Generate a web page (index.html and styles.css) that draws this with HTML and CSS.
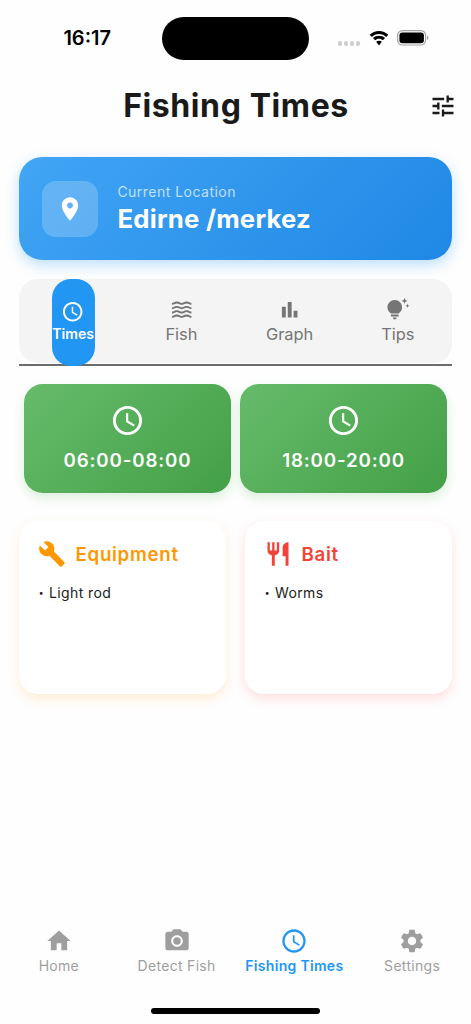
FILE: index.html
```
<!DOCTYPE html>
<html lang="en">
<head>
<meta charset="utf-8">
<meta name="viewport" content="width=device-width, initial-scale=1">
<title>Fishing Times</title>
<link rel="stylesheet" href="styles.css">
</head>
<body>
<svg class="symbols" aria-hidden="true">
  <symbol id="clock" viewBox="0 0 24 24"><path d="M11.99 2C6.47 2 2 6.48 2 12s4.47 10 9.99 10C17.52 22 22 17.52 22 12S17.52 2 11.99 2zM12 20c-4.42 0-8-3.58-8-8s3.58-8 8-8 8 3.58 8 8-3.58 8-8 8zm.5-13H11v6l5.25 3.15.75-1.23-4.5-2.67z"/></symbol>
  <symbol id="wave" viewBox="0 0 24 24"><path id="w" d="M17 16.99c-1.35 0-2.2.42-2.95.8-.65.33-1.18.6-2.05.6-.9 0-1.4-.25-2.05-.6-.75-.38-1.57-.8-2.95-.8s-2.2.42-2.95.8c-.65.33-1.17.6-2.05.6v1.95c1.35 0 2.2-.42 2.95-.8.65-.33 1.17-.6 2.05-.6s1.4.25 2.05.6c.75.38 1.57.8 2.95.8s2.2-.42 2.95-.8c.65-.33 1.18-.6 2.05-.6.9 0 1.4.25 2.05.6.75.38 1.58.8 2.95.8v-1.95c-.9 0-1.4-.25-2.05-.6-.75-.38-1.6-.8-2.95-.8z"/><use href="#w" y="-4.45"/><use href="#w" y="-8.9"/><use href="#w" y="-13.35"/></symbol>
</svg>
<header class="status">
  <div class="status-time"><span>16:17</span></div>
  <div class="island"></div>
  <div class="status-icons">
    <span class="dots"><i></i><i></i><i></i><i></i></span>
    <svg class="wifi" viewBox="0 0 20 15"><path d="M10 3C12.8 3 15.3 4.1 17.2 5.9L19.3 3.8C16.9 1.5 13.6.1 10 .1S3.1 1.5.7 3.8l2.1 2.1C4.7 4.100 7.200 3 10 3z"/><path d="M10 7.700c1.500 0 2.900.600 3.900 1.500L16 7.100C14.400 5.600 12.300 4.800 10 4.800S5.600 5.600 4 7.100l2.100 2.100c1-.900 2.400-1.500 3.900-1.500z"/><path d="M10 9.700c-1.100 0-2.100.4-2.800 1.100L10 14.400l2.800-3.600C12.100 10.100 11.100 9.700 10 9.700z"/></svg>
    <svg class="battery" viewBox="0 0 32 16"><rect x=".6" y=".6" width="28" height="14.400" rx="4.800" fill="none" stroke="#a3a3a3" stroke-width="1.200"/><rect x="2.400" y="2.400" width="24.500" height="10.800" rx="3"/><path d="M30 5.500c1.900.900 1.900 3.700 0 4.600z" fill="#a3a3a3"/></svg>
  </div>
</header>
<div class="titlebar">
  <h1>Fishing Times</h1>
  <svg class="icon-lg tune" viewBox="0 0 24 24"><path d="M3 17v2h6v-2H3zM3 5v2h10V5H3zm10 16v-2h8v-2h-8v-2h-2v6h2zM7 9v2H3v2h4v2h2V9H7zm14 4v-2H11v2h10zm-6-4h2V7h4V5h-4V3h-2v6z"/></svg>
</div>
<main>
  <section class="location">
    <div class="pin"><svg class="icon-lg" viewBox="0 0 24 24"><path d="M12 2C8.130 2 5 5.130 5 9c0 5.250 7 13 7 13s7-7.750 7-13c0-3.870-3.130-7-7-7zm0 9.500c-1.380 0-2.500-1.120-2.500-2.500s1.120-2.500 2.500-2.500 2.500 1.120 2.500 2.500-1.120 2.500-2.500 2.500z"/></svg></div>
    <div class="place"><span class="place-label">Current Location</span><strong>Edirne /merkez</strong></div>
  </section>
  <nav class="tabs">
    <a class="tab tab-active"><span class="tab-pill"><svg class="icon-md"><use href="#clock"/></svg><span>Times</span></span></a>
    <a class="tab"><svg class="icon-md"><use href="#wave"/></svg><span>Fish</span></a>
    <a class="tab"><svg class="icon-md" viewBox="0 0 24 24"><path d="M4 9h4v11H4zm12 4h4v7h-4zm-6-9h4v16h-4z"/></svg><span>Graph</span></a>
    <a class="tab"><svg class="icon-md" viewBox="0 0 24 24"><path d="M7 20h4c0 1.100-.9 2-2 2s-2-.9-2-2zm-2-1h8v-2H5v2zm11.500-9.500c0 3.820-2.660 5.860-3.770 6.500H5.270C4.160 15.360 1.500 13.320 1.500 9.500 1.500 5.360 4.860 2 9 2s7.500 3.360 7.500 7.500zm4.870-2.130L20 8l1.370.63L22 10l.63-1.370L24 8l-1.370-.63L22 6l-.63 1.370zM19 6l.94-2.060L22 3l-2.060-.94L19 0l-.94 2.060L16 3l2.060.94L19 6z"/></svg><span>Tips</span></a>
  </nav>
  <section class="times">
    <div class="time"><svg class="icon-xl"><use href="#clock"/></svg><span>06:00-08:00</span></div>
    <div class="time"><svg class="icon-xl"><use href="#clock"/></svg><span>18:00-20:00</span></div>
  </section>
  <section class="cards">
    <article class="card card-gear">
      <h2><svg class="icon-lg" viewBox="0 0 24 24"><path d="M22.700 19l-9.100-9.100c.9-2.300.4-5-1.500-6.900-2-2-5-2.400-7.400-1.300L9 6 6 9 1.600 4.700C.4 7.100.9 10.100 2.900 12.100c1.900 1.900 4.600 2.400 6.900 1.500l9.100 9.100c.4.4 1 .4 1.400 0l2.300-2.300c.5-.4.5-1.100.1-1.400z"/></svg><span>Equipment</span></h2>
      <p><b>•</b><span>Light rod</span></p>
    </article>
    <article class="card card-bait">
      <h2><svg class="icon-lg" viewBox="0 0 24 24"><path d="M11 9H9V2H7v7H5V2H3v7c0 2.120 1.660 3.840 3.750 3.970V22h2.500v-9.030C11.340 12.840 13 11.120 13 9V2h-2v7zm5-3v8h2.500v8H21V2c-2.760 0-5 2.240-5 4z"/></svg><span>Bait</span></h2>
      <p><b>•</b><span>Worms</span></p>
    </article>
  </section>
</main>
<nav class="bottom">
  <a><svg class="icon-lg" viewBox="0 0 24 24"><path d="M10 20v-6h4v6h5v-8h3L12 3 2 12h3v8z"/></svg><span>Home</span></a>
  <a><svg class="icon-lg" viewBox="0 0 24 24"><circle cx="12" cy="12" r="3.200"/><path d="M9 2L7.170 4H4c-1.100 0-2 .9-2 2v12c0 1.100.9 2 2 2h16c1.100 0 2-.9 2-2V6c0-1.100-.9-2-2-2h-3.170L15 2H9zm3 15c-2.760 0-5-2.240-5-5s2.240-5 5-5 5 2.240 5 5-2.240 5-5 5z"/></svg><span>Detect Fish</span></a>
  <a class="current"><svg class="icon-lg"><use href="#clock"/></svg><span>Fishing Times</span></a>
  <a><svg class="icon-lg" viewBox="0 0 24 24"><path d="M19.140 12.940c.04-.3.060-.61.060-.94 0-.32-.02-.64-.07-.94l2.030-1.580c.18-.14.230-.41.120-.61l-1.920-3.320c-.12-.22-.37-.29-.59-.22l-2.390.96c-.5-.38-1.030-.7-1.620-.94l-.36-2.540c-.04-.24-.24-.41-.48-.41h-3.840c-.24 0-.43.170-.47.410l-.36 2.540c-.59.240-1.130.570-1.620.940l-2.390-.96c-.22-.08-.47 0-.59.220L2.740 8.870c-.12.210-.08.470.12.610l2.030 1.580c-.05.3-.09.630-.09.940s.02.640.070.940l-2.030 1.580c-.18.140-.23.410-.12.610l1.920 3.320c.12.220.37.290.59.220l2.390-.96c.5.380 1.030.7 1.620.94l.36 2.540c.05.240.24.410.48.410h3.840c.24 0 .44-.17.47-.41l.36-2.540c.59-.24 1.130-.56 1.620-.94l2.390.96c.22.080.47 0 .59-.22l1.920-3.320c.12-.22.070-.47-.12-.61l-2.010-1.580zM12 15.600c-1.980 0-3.600-1.620-3.600-3.600s1.620-3.600 3.600-3.600 3.600 1.620 3.600 3.600-1.620 3.600-3.600 3.600z"/></svg><span>Settings</span></a>
</nav>
<footer class="home-indicator"></footer>
</body>
</html>
```
FILE: styles.css
```
* { box-sizing: border-box; }
body {
  margin: 0;
  height: 1024px;
  display: flex;
  flex-direction: column;
  background: #fefefe;
  color: #1a1a1a;
  font-family: Inter, "Liberation Sans", sans-serif;
  overflow: hidden;
}
svg { display: block; fill: currentColor; flex: none; }
.symbols { position: absolute; width: 0; height: 0; }
.icon-md { width: 23.4px; height: 23.4px; }
.icon-lg { width: 28px; height: 28px; }
.icon-xl { width: 35px; height: 35px; }

.status {
  height: 76px;
  padding-top: 16.5px;
  display: grid;
  grid-template-columns: 162px 147px 162px;
  color: #000;
}
.status-time { height: 43px; display: flex; align-items: center; justify-content: flex-end; padding-right: 51px; font-size: 20px; font-weight: 600; letter-spacing: 0; }
.island { height: 43px; border-radius: 22px; background: #000; }
.status-icons { height: 43px; display: flex; align-items: center; padding-left: 28.5px; }
.dots { display: flex; gap: 2px; padding-top: 11px; margin-right: 9px; }
.dots i { width: 4.2px; height: 4.2px; border-radius: 50%; background: #cdcdcd; }
.wifi { width: 20px; height: 15px; margin-right: 8px; }
.battery { width: 32px; height: 16px; }

.titlebar { height: 60px; display: grid; grid-template-columns: 1fr auto 1fr; align-items: center; padding: 0 14.5px; }
h1 { grid-column: 2; margin: 0; padding-left: 1px; font-size: 32px; line-height: 38px; font-weight: 700; letter-spacing: .6px; }
.tune { justify-self: end; }

main { padding: 21px 19px 0; display: flex; flex-direction: column; }
.location {
  height: 103px;
  padding: 0 23.4px;
  display: flex;
  align-items: center;
  gap: 19px;
  border-radius: 23.4px;
  background: linear-gradient(135deg, #42a5f5, #1e88e5);
  box-shadow: 0 5px 14px rgba(33, 150, 243, .3);
  color: #fff;
}
.pin { width: 56px; height: 56px; border-radius: 14px; display: grid; place-items: center; background: rgba(255, 255, 255, .2); }
.place { display: flex; flex-direction: column; gap: 2px; }
.place-label { font-size: 14px; line-height: 18px; letter-spacing: .48px; color: rgba(255, 255, 255, .7); }
.place strong { font-size: 25.7px; line-height: 32px; font-weight: 650; letter-spacing: .25px; }

.tabs {
  height: 87px;
  margin-top: 19px;
  display: grid;
  grid-template-columns: repeat(4, 1fr);
  border-radius: 19px 19px 0 0;
  position: relative;
  isolation: isolate;
  color: #757575;
  font-size: 16.4px;
}
.tabs::before { content: ""; position: absolute; z-index: -1; inset: 0 0 3px; border-radius: 19px; background: #f4f4f4; }
.tabs::after { content: ""; position: absolute; z-index: -1; left: 0; right: 0; bottom: 0; height: 2px; background: #6c6c6c; }
.tab { display: flex; flex-direction: column; align-items: center; justify-content: center; line-height: 22px; gap: 1px; padding-bottom: 2px; }
.tab-active { padding-bottom: 0; }
.tab-pill { width: 43px; height: 87px; display: flex; flex-direction: column; align-items: center; justify-content: center; border-radius: 19px; background: #2196f3; color: #fff; font-size: 14.1px; font-weight: 600; }

.times { margin-top: 18px; padding: 0 5px; display: grid; grid-template-columns: 1fr 1fr; gap: 9px; }
.time { height: 109px; display: flex; flex-direction: column; align-items: center; justify-content: center; gap: 10px; border-radius: 18.7px; background: linear-gradient(135deg, #66bb6a, #43a047); box-shadow: 0 5px 12px rgba(76, 175, 80, .2); color: #fff; font-size: 18.7px; line-height: 26px; font-weight: 600; letter-spacing: .85px; }

.cards { margin-top: 28px; display: grid; grid-template-columns: 1fr 1fr; gap: 19px; }
.card { height: 173px; padding: 19px; border-radius: 18.7px; background: #fff; }
.card-gear { box-shadow: 0 5px 12px rgba(255, 152, 0, .16); }
.card-bait { box-shadow: 0 5px 12px rgba(244, 67, 54, .16); }
.card h2 { margin: 0; height: 28px; display: flex; align-items: center; gap: 9.5px; font-size: 18.7px; font-weight: 600; letter-spacing: .7px; }
.card-gear h2 { color: #ff9800; }
.card-bait h2 { color: #f44336; }
.card p { margin: 15px 0 0; display: flex; line-height: 20px; font-size: 14px; letter-spacing: .38px; color: #212121; }
.card b { width: 10px; margin-left: 1px; font-size: 9px; }

.bottom { margin-top: auto; height: 81px; display: grid; grid-template-columns: repeat(4, 1fr); color: #9e9e9e; font-size: 14px; letter-spacing: .3px; }
.bottom a { display: flex; flex-direction: column; align-items: center; gap: 1px; line-height: 20px; white-space: nowrap; }
.bottom .current { color: #2196f3; font-weight: 600; }
.home-indicator { align-self: center; width: 169px; height: 6px; margin-bottom: 10px; border-radius: 3px; background: #000; }
```
